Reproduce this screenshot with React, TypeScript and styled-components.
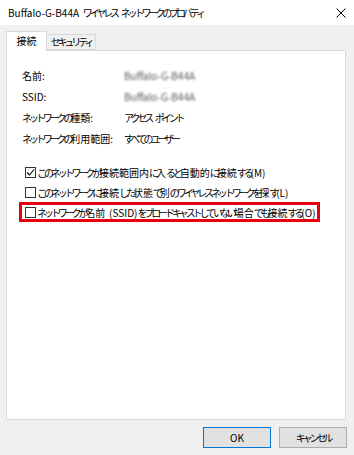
import React from "react";
import styled, { createGlobalStyle } from "styled-components";

const GlobalStyle = createGlobalStyle`
  html, body {
    margin: 0;
    padding: 0;
    background: #f0f0f0;
  }
  body {
    font-family: "Noto Sans CJK JP", "Noto Sans", sans-serif;
    font-size: 10px;
    color: #000;
    word-spacing: 1.5px;
  }
`;

// kana in the dialog font is much narrower than in Noto CJK
const Kana = styled.span`
  letter-spacing: -3.1px;
`;

const KANA_RUN = /([\u3040-\u30ff]+)/;

const Jp: React.FC<{ children: string }> = ({ children }) => (
  <>
    {children.split(KANA_RUN).map((part, i) =>
      i % 2 === 1 ? <Kana key={i}>{part}</Kana> : part
    )}
  </>
);

const Window = styled.div`
  width: 354px;
  height: 455px;
  background: #f0f0f0;
  display: flex;
  flex-direction: column;
  overflow: hidden;
`;

const TitleBar = styled.div`
  height: 25px;
  background: #fff;
  display: flex;
  align-items: center;
  justify-content: space-between;
  padding: 0 8px;
  box-sizing: border-box;
`;

const Title = styled.span`
  line-height: 25px;
  white-space: nowrap;
`;

const Body = styled.div`
  flex: 1;
  display: flex;
  flex-direction: column;
  padding: 6px 8px 0 6px;
`;

const TabStrip = styled.div`
  display: flex;
  align-items: flex-end;
  height: 19px;
`;

const Tab = styled.div<{ $active?: boolean; $w: number }>`
  position: relative;
  z-index: ${(p) => (p.$active ? 1 : 0)};
  box-sizing: border-box;
  height: ${(p) => (p.$active ? "20px" : "16px")};
  margin-bottom: ${(p) => (p.$active ? "-1px" : "0")};
  width: ${(p) => p.$w}px;
  border: 1px solid #d9d9d9;
  border-bottom: ${(p) => (p.$active ? "none" : "1px solid #d9d9d9")};
  border-left: ${(p) => (p.$active ? "1px solid #d9d9d9" : "none")};
  background: ${(p) => (p.$active ? "#fff" : "#f0f0f0")};
  display: flex;
  align-items: center;
  justify-content: center;
  padding-bottom: ${(p) => (p.$active ? "1px" : "0")};
  line-height: 14px;
  white-space: nowrap;
`;

const Panel = styled.div`
  box-sizing: border-box;
  height: 370px;
  background: #fff;
  border: 1px solid #d9d9d9;
  padding: 14px 0 0 15px;
  display: flex;
  flex-direction: column;
`;

const InfoGrid = styled.div`
  display: grid;
  grid-template-columns: 102px auto;
  grid-auto-rows: 21px;
  align-items: center;
`;

const Label = styled.div`
  white-space: nowrap;
`;

const Value = styled.div<{ $blurred?: boolean }>`
  white-space: nowrap;
  ${(p) =>
    p.$blurred &&
    `
    color: #555;
    filter: blur(1.3px);
  `}
`;

const Options = styled.div`
  display: flex;
  flex-direction: column;
  margin-top: 13px;
  margin-left: -3px;
`;

const OptionRow = styled.label<{ $highlight?: boolean }>`
  display: flex;
  align-items: center;
  height: 20px;
  box-sizing: border-box;
  white-space: nowrap;
  align-self: flex-start;
  padding-left: ${(p) => (p.$highlight ? "3px" : "6px")};
  padding-right: 1px;
  border: ${(p) => (p.$highlight ? "3px solid #e60012" : "none")};
`;

const Box = styled.span`
  box-sizing: border-box;
  width: 11px;
  height: 11px;
  border: 1px solid #333;
  background: #fff;
  margin-right: 1px;
  display: inline-flex;
  align-items: center;
  justify-content: center;
  flex-shrink: 0;
`;

const Footer = styled.div`
  display: flex;
  justify-content: flex-end;
  gap: 8px;
  padding-top: 7px;
  margin-right: -1px;
`;

const Button = styled.div<{ $default?: boolean }>`
  box-sizing: border-box;
  width: 68px;
  height: 21px;
  background: #e1e1e1;
  border: 1px solid ${(p) => (p.$default ? "#0078d7" : "#adadad")};
  display: flex;
  align-items: center;
  justify-content: center;
`;

const Check = () => (
  <svg width="9" height="9" viewBox="0 0 9 9">
    <path d="M1 4.5 L3.5 7 L8 1.5" fill="none" stroke="#000" strokeWidth="1.1" />
  </svg>
);

const CloseIcon = () => (
  <svg width="10" height="10" viewBox="0 0 10 10">
    <path d="M0.5 0.5 L9.5 9.5 M9.5 0.5 L0.5 9.5" stroke="#000" strokeWidth="1" />
  </svg>
);

const Checkbox: React.FC<{ checked?: boolean }> = ({ checked }) => (
  <Box>{checked && <Check />}</Box>
);

export default function App() {
  return (
    <Window>
      <GlobalStyle />
      <TitleBar>
        <Title>
          <Jp>Buffalo-G-B44A ワイヤレス ネットワークのプロパティ</Jp>
        </Title>
        <CloseIcon />
      </TitleBar>
      <Body>
        <TabStrip>
          <Tab $active $w={41}>接続</Tab>
          <Tab $w={49}>
            <Jp>セキュリティ</Jp>
          </Tab>
        </TabStrip>
        <Panel>
          <InfoGrid>
            <Label>名前:</Label>
            <Value $blurred>Buffalo-G-B44A</Value>
            <Label>SSID:</Label>
            <Value $blurred>Buffalo-G-B44A</Value>
            <Label>
              <Jp>ネットワークの種類:</Jp>
            </Label>
            <Value>
              <Jp>アクセス ポイント</Jp>
            </Value>
            <Label>
              <Jp>ネットワークの利用範囲:</Jp>
            </Label>
            <Value>
              <Jp>すべてのユーザー</Jp>
            </Value>
          </InfoGrid>
          <Options>
            <OptionRow>
              <Checkbox checked />
              <Jp>このネットワークが接続範囲内に入ると自動的に接続する(M)</Jp>
            </OptionRow>
            <OptionRow>
              <Checkbox />
              <Jp>このネットワークに接続した状態で別のワイヤレス ネットワークを探す(L)</Jp>
            </OptionRow>
            <OptionRow $highlight>
              <Checkbox />
              <Jp>ネットワークが名前 (SSID) をブロードキャストしていない場合でも接続する(O)</Jp>
            </OptionRow>
          </Options>
        </Panel>
        <Footer>
          <Button $default>OK</Button>
          <Button>
            <Jp>キャンセル</Jp>
          </Button>
        </Footer>
      </Body>
    </Window>
  );
}
